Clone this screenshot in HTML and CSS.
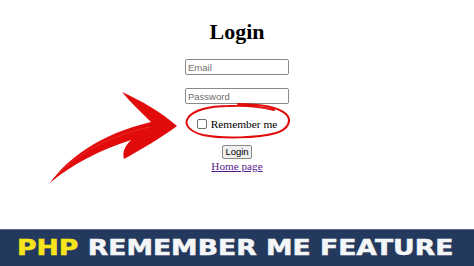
FILE: index.html
```html
<!DOCTYPE html>
<html>
<head>
<meta charset="utf-8">
<link rel="stylesheet" href="styles.css">
</head>
<body>
<div class="page">
  <main class="login">
    <h1 class="title">Login</h1>
    <form class="form">
      <input class="field field-email" type="text" placeholder="Email">
      <input class="field field-password" type="password" placeholder="Password">
      <label class="remember"><input class="check" type="checkbox"><span>Remember me</span></label>
      <button class="btn" type="button">Login</button>
      <a class="home" href="#">Home page</a>
    </form>
  </main>
  <footer class="banner">
    <span class="banner-text"><span class="php">PHP</span> <span class="rest">REMEMBER ME FEATURE</span></span>
  </footer>
  <svg class="marks" width="474" height="266" viewBox="0 0 474 266" xmlns="http://www.w3.org/2000/svg">
    <path class="arrow" d="M50 183 C68 158 100 134 151 122 C141 112 130 102 122 92 C142 101 161 112 177 126 C161 138 142 149 124 159 C122 152 125 146 131 140 C100 150 72 164 50 183 Z"/>
    <path class="arrow-hl" d="M58 174 C80 152 110 136 150 127" />
    <path class="circle" d="M238 104 C262 104 279 108 286 114 C292 120 289 129 276 133 C258 138 222 139 203 135 C188 131 184 124 188 118 C193 110 210 106 228 106 C248 105 262 107 274 110"/>
  </svg>
</div>
</body>
</html>
```
FILE: styles.css
```css
html, body {
  margin: 0;
  padding: 0;
  background: #ffffff;
}
.page {
  position: relative;
  width: 474px;
  height: 266px;
  display: flex;
  flex-direction: column;
  overflow: hidden;
}
.login {
  height: 229px;
  display: flex;
  flex-direction: column;
  align-items: center;
  font-family: "Liberation Serif", "Times New Roman", serif;
  color: #000;
}
.title {
  margin: 20px 0 0;
  font-size: 22px;
  line-height: 24px;
  font-weight: bold;
}
.form {
  display: flex;
  flex-direction: column;
  align-items: center;
  margin-top: 15px;
}
.field {
  box-sizing: border-box;
  width: 104px;
  height: 16px;
  margin: 0;
  padding: 0 2px;
  border: 1px solid #8a8a8a;
  border-radius: 2px;
  font-family: "Liberation Sans", Arial, sans-serif;
  font-size: 9.5px;
  background: #fff;
}
.field::placeholder {
  color: #6f6f6f;
}
.field-password {
  margin-top: 13px;
}
.remember {
  display: flex;
  align-items: center;
  gap: 4px;
  margin-top: 13px;
  height: 14px;
  font-size: 11.4px;
  line-height: 14px;
}
.check {
  appearance: none;
  -webkit-appearance: none;
  box-sizing: border-box;
  width: 10px;
  height: 10px;
  margin: 0;
  border: 1px solid #6e6e6e;
  border-radius: 2px;
  background: #fff;
}
.btn {
  box-sizing: border-box;
  margin-top: 14px;
  width: 30px;
  height: 14px;
  padding: 0;
  border: 1px solid #8a8a8a;
  border-radius: 2px;
  background: #efefef;
  font-family: "Liberation Sans", Arial, sans-serif;
  font-size: 9.5px;
  line-height: 12px;
  color: #000;
}
.home {
  margin-top: 1px;
  font-size: 11.2px;
  line-height: 13px;
  color: #551a8b;
  text-decoration: underline;
}
.banner {
  box-sizing: border-box;
  height: 37px;
  background: #23395d;
  border-top: 1px solid #5b6b85;
  display: flex;
  align-items: center;
  padding-left: 17px;
  padding-top: 1px;
  font-family: "DejaVu Sans", "Liberation Sans", sans-serif;
  font-weight: bold;
  font-size: 20.5px;
  line-height: 1;
  white-space: nowrap;
}
.banner-text {
  display: inline-block;
  transform: scaleX(1.3);
  transform-origin: left center;
}
.php {
  color: #f6e41c;
  -webkit-text-stroke: 0.5px #f6e41c;
}
.rest {
  color: #f4f5f7;
  -webkit-text-stroke: 0.5px #f4f5f7;
}
.marks {
  position: absolute;
  left: 0;
  top: 0;
  pointer-events: none;
}
.arrow {
  fill: #e10b0b;
}
.arrow-hl {
  fill: none;
  stroke: #f06060;
  stroke-width: 0.6;
  opacity: 0.6;
}
.circle {
  fill: none;
  stroke: #e10b0b;
  stroke-width: 2;
  stroke-linecap: round;
}
```
